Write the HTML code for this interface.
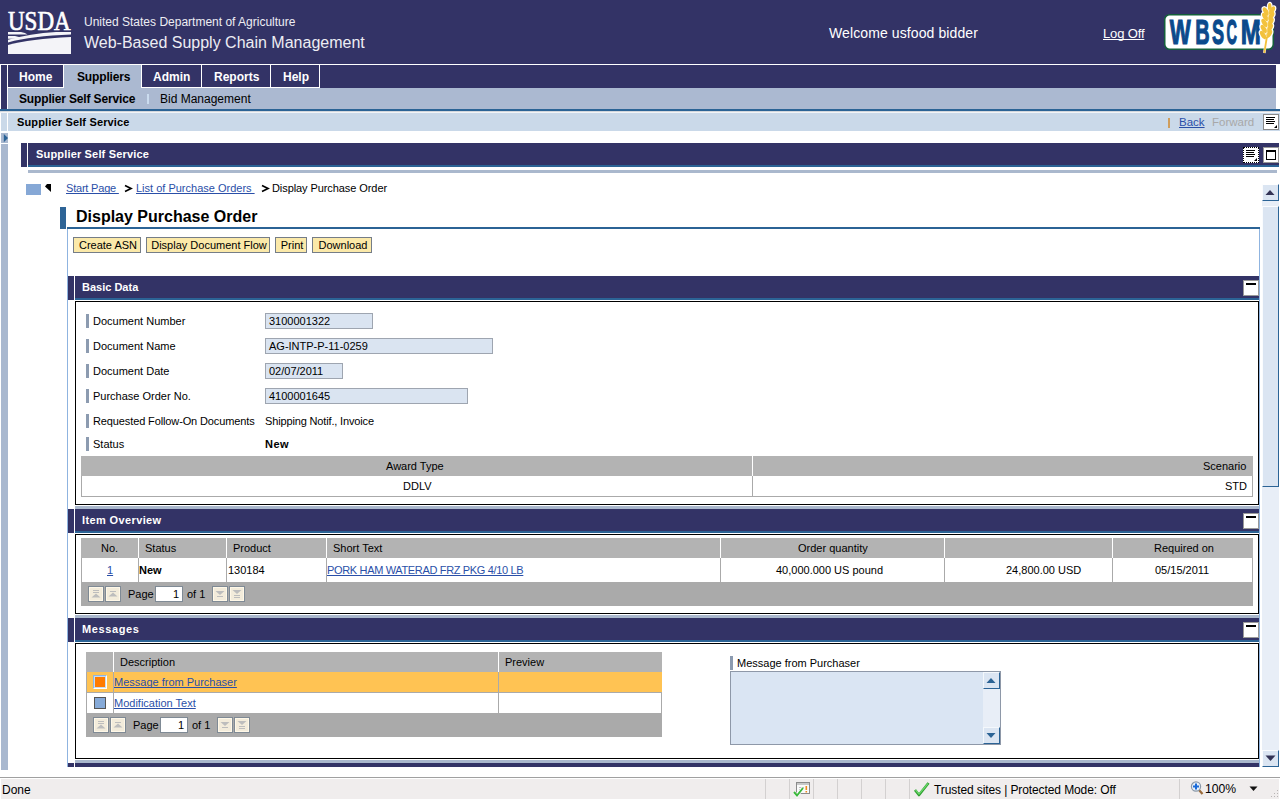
<!DOCTYPE html>
<html><head><meta charset="utf-8">
<style>
*{margin:0;padding:0;box-sizing:border-box}
html,body{width:1280px;height:800px;overflow:hidden;background:#fff;font-family:"Liberation Sans",sans-serif;color:#000}
.a{position:absolute}
.t{position:absolute;white-space:nowrap;line-height:1;text-decoration-skip-ink:none}
.lnk,.t{text-decoration-skip-ink:none}
.b{font-weight:bold}
.lnk{color:#2a4fa8;text-decoration:underline}
.btn{top:237px;height:16px;background:#fbe9a9;border:1px solid #757d87;padding-left:2px;font-size:11px;line-height:14px;text-align:center;white-space:nowrap}
.mini{width:16px;height:16px;background:#fff;border:1px solid #999}
.mini:after{content:"";position:absolute;left:2px;top:2px;width:10px;height:2px;background:#000}
.lbar{left:86px;width:3px;height:14px;background:#8c9bb0}
.inp{left:265px;height:16px;background:#dae4f1;border:1px solid #9ea5b0;font-size:11px;line-height:14px;padding-left:3px;white-space:nowrap}
.pb{width:15px;height:15px;background:#f2ead5;border:1px solid #999}
.pin{width:28px;height:16px;background:#fff;border:1px solid #7f8a95;font-size:11px;line-height:14px;text-align:right;padding-right:3px}
</style></head><body>
<!-- HEADER -->
<div class="a" style="left:0;top:0;width:1280px;height:64px;background:#333366"></div>
<svg class="a" style="left:0;top:0" width="80" height="64" viewBox="0 0 80 64">
  <text x="8" y="29.8" font-family="Liberation Serif" font-size="28" fill="#fff" stroke="#fff" stroke-width="0.7" textLength="62.6" lengthAdjust="spacingAndGlyphs">USDA</text>
  <g fill="#f4f4f8">
  <path d="M8,32 H21 Q25.5,32.6 27.5,34.6 H8 Z"/>
  <path d="M8,35.9 H15 Q19.5,36.6 22,38.8 H8 Z"/>
  <path d="M8,39.8 Q30,33.6 56,32 H71 V34.6 Q32,36.2 8,42.4 Z"/>
  <path d="M8,45 Q30,38.6 71,36.9 V54 H8 Z"/>
  </g>
</svg>
<div class="t" style="left:84px;top:16px;font-size:12px;color:#ededf3">United States Department of Agriculture</div>
<div class="t" style="left:84px;top:35px;font-size:16px;color:#ededf3">Web-Based Supply Chain Management</div>
<div class="t" style="left:829px;top:26px;font-size:14px;letter-spacing:0.1px;color:#fff">Welcome usfood bidder</div>
<div class="t" style="left:1103px;top:27px;font-size:13px;letter-spacing:-0.15px;color:#fff;text-decoration:underline">Log Off</div>
<svg class="a" style="left:1160px;top:0" width="120" height="60" viewBox="0 0 120 60">
  <rect x="4.7" y="14.7" width="108.6" height="34.6" rx="5" fill="#fff" stroke="#14603a" stroke-width="1.6"/>
  <text transform="translate(9.85,0) scale(0.635,1)" x="0" y="44.2" font-family="Liberation Sans" font-weight="bold" font-size="35" fill="#0b4a8c" stroke="#0b4a8c" stroke-width="1" vector-effect="non-scaling-stroke">W</text><text transform="translate(35.31,0) scale(0.568,1)" x="0" y="44.2" font-family="Liberation Sans" font-weight="bold" font-size="35" fill="#0b4a8c" stroke="#0b4a8c" stroke-width="1" vector-effect="non-scaling-stroke">B</text><text transform="translate(51.93,0) scale(0.518,1)" x="0" y="44.2" font-family="Liberation Sans" font-weight="bold" font-size="35" fill="#0b4a8c" stroke="#0b4a8c" stroke-width="1" vector-effect="non-scaling-stroke">S</text><text transform="translate(66.42,0) scale(0.413,1)" x="0" y="44.2" font-family="Liberation Sans" font-weight="bold" font-size="35" fill="#0b4a8c" stroke="#0b4a8c" stroke-width="1" vector-effect="non-scaling-stroke">C</text><text transform="translate(80.77,0) scale(0.692,1)" x="0" y="44.2" font-family="Liberation Sans" font-weight="bold" font-size="35" fill="#0b4a8c" stroke="#0b4a8c" stroke-width="1" vector-effect="non-scaling-stroke">M</text>
  <g transform="translate(1.5,0)"><g fill="#fff" stroke="#fff" stroke-width="2.4"><path d="M102.8,53 L105.5,36" fill="none"/><ellipse cx="101.56" cy="35.00" rx="2.3" ry="4.6" transform="rotate(-32 101.56 35.00)"/><ellipse cx="107.56" cy="34.00" rx="2.3" ry="4.6" transform="rotate(32 107.56 34.00)"/><ellipse cx="102.29" cy="29.00" rx="2.3" ry="4.6" transform="rotate(-32 102.29 29.00)"/><ellipse cx="108.29" cy="28.00" rx="2.3" ry="4.6" transform="rotate(32 108.29 28.00)"/><ellipse cx="103.02" cy="23.00" rx="2.3" ry="4.6" transform="rotate(-32 103.02 23.00)"/><ellipse cx="109.02" cy="22.00" rx="2.3" ry="4.6" transform="rotate(32 109.02 22.00)"/><ellipse cx="103.75" cy="17.00" rx="2.3" ry="4.6" transform="rotate(-32 103.75 17.00)"/><ellipse cx="109.75" cy="16.00" rx="2.3" ry="4.6" transform="rotate(32 109.75 16.00)"/><ellipse cx="104.41" cy="11.50" rx="2.3" ry="4.6" transform="rotate(-32 104.41 11.50)"/><ellipse cx="110.41" cy="10.50" rx="2.3" ry="4.6" transform="rotate(32 110.41 10.50)"/><ellipse cx="108.2" cy="7" rx="1.8" ry="4"/></g>
  <g fill="#f3c23c"><path d="M102.8,53 L105.5,36" stroke="#f3c23c" stroke-width="1.8" fill="none"/><ellipse cx="101.56" cy="35.00" rx="2.3" ry="4.6" transform="rotate(-32 101.56 35.00)"/><ellipse cx="107.56" cy="34.00" rx="2.3" ry="4.6" transform="rotate(32 107.56 34.00)"/><ellipse cx="102.29" cy="29.00" rx="2.3" ry="4.6" transform="rotate(-32 102.29 29.00)"/><ellipse cx="108.29" cy="28.00" rx="2.3" ry="4.6" transform="rotate(32 108.29 28.00)"/><ellipse cx="103.02" cy="23.00" rx="2.3" ry="4.6" transform="rotate(-32 103.02 23.00)"/><ellipse cx="109.02" cy="22.00" rx="2.3" ry="4.6" transform="rotate(32 109.02 22.00)"/><ellipse cx="103.75" cy="17.00" rx="2.3" ry="4.6" transform="rotate(-32 103.75 17.00)"/><ellipse cx="109.75" cy="16.00" rx="2.3" ry="4.6" transform="rotate(32 109.75 16.00)"/><ellipse cx="104.41" cy="11.50" rx="2.3" ry="4.6" transform="rotate(-32 104.41 11.50)"/><ellipse cx="110.41" cy="10.50" rx="2.3" ry="4.6" transform="rotate(32 110.41 10.50)"/><ellipse cx="108.2" cy="7" rx="1.8" ry="4"/></g>
  <g stroke="#fbe6a8" stroke-width="0.6" fill="none"><path d="M105,37 L107.5,9"/></g></g>
</svg>

<!-- NAV -->
<div class="a" style="left:1px;top:65px;width:1275px;height:44px;background:#333366"></div>
<div class="a" style="left:7px;top:65px;width:1px;height:44px;background:#fff"></div>
<div class="a" style="left:8px;top:88px;width:1268px;height:21px;background:#abb9d1"></div>
<!-- tabs borders -->
<div class="a" style="left:8px;top:87px;width:312px;height:1px;background:#fff"></div>
<div class="a" style="left:63px;top:65px;width:1px;height:23px;background:#fff"></div>
<div class="a" style="left:64px;top:65px;width:77px;height:23px;background:#abb9d1"></div>
<div class="a" style="left:64px;top:87px;width:77px;height:1px;background:#abb9d1"></div>
<div class="a" style="left:141px;top:65px;width:1px;height:23px;background:#fff"></div>
<div class="a" style="left:201px;top:65px;width:1px;height:23px;background:#fff"></div>
<div class="a" style="left:270px;top:65px;width:1px;height:23px;background:#fff"></div>
<div class="a" style="left:319px;top:65px;width:1px;height:23px;background:#fff"></div>
<div class="t b" style="left:19px;top:71px;font-size:12px;color:#fff">Home</div>
<div class="t b" style="left:77px;top:71px;letter-spacing:-0.15px;font-size:12px;color:#000">Suppliers</div>
<div class="t b" style="left:153px;top:71px;font-size:12px;color:#fff">Admin</div>
<div class="t b" style="left:214px;top:71px;font-size:12px;color:#fff">Reports</div>
<div class="t b" style="left:283px;top:71px;font-size:12px;color:#fff">Help</div>
<div class="t b" style="left:19px;top:93px;font-size:12px;letter-spacing:-0.15px;color:#000">Supplier Self Service</div>
<div class="a" style="left:147px;top:94px;width:2px;height:10px;background:#cbdcef"></div>
<div class="t" style="left:160px;top:93px;font-size:12px;color:#000">Bid Management</div>

<div class="a" style="left:0;top:109px;width:1280px;height:2px;background:#2b6395"></div>
<!-- toolbar -->
<div class="a" style="left:0;top:111px;width:1280px;height:1px;background:#d3d7dc"></div>
<div class="a" style="left:0;top:112px;width:1280px;height:1px;background:#f2f4f7"></div>
<div class="a" style="left:1px;top:113px;width:6px;height:18px;background:#cad9e9"></div>
<div class="a" style="left:8px;top:113px;width:1272px;height:18px;background:#cad9e9"></div>
<div class="t b" style="left:17px;top:117px;font-size:11px;letter-spacing:0.15px;color:#000">Supplier Self Service</div>
<div class="a" style="left:1168px;top:118px;width:2px;height:10px;background:#cf9d5c"></div>
<div class="t" style="left:1179px;top:117px;font-size:11.5px;color:#2a4fa8;text-decoration:underline">Back</div>
<div class="t" style="left:1212px;top:117px;font-size:11.5px;color:#a8a8a8">Forward</div>
<div class="a" style="left:1263px;top:114px;width:16px;height:16px;background:#fff;border:1px solid #8a8a8a"></div><svg class="a" style="left:1263px;top:114px" width="16" height="16" viewBox="0 0 16 16"><rect x="3" y="3" width="9" height="1" fill="#000"/><rect x="3" y="5" width="8" height="1" fill="#000"/><rect x="3" y="7" width="9" height="1" fill="#000"/><rect x="3" y="9" width="8" height="1" fill="#000"/><path d="M11,14 L14,14 L14,11 Z" fill="#000"/></svg>

<!-- left nav strip -->
<div class="a" style="left:1px;top:133px;width:7px;height:10px;background:#a9b8cf"></div>
<svg class="a" style="left:1px;top:133px" width="7" height="10"><path d="M2.8,1 L7,5 L2.8,9.2 Z" fill="#2b6395"/></svg>
<div class="a" style="left:1px;top:144px;width:7px;height:626px;background:#a9b8cf"></div>

<!-- portlet header -->
<div class="a" style="left:21px;top:143px;width:6px;height:24px;background:#333366"></div>
<div class="a" style="left:28px;top:143px;width:1251px;height:22px;background:#333366"></div>
<div class="a" style="left:28px;top:165px;width:1251px;height:2px;background:#2b6395"></div>
<div class="a" style="left:28px;top:170px;width:1249px;height:3px;background:#aab8cd"></div>
<div class="t b" style="left:36px;top:149px;font-size:11px;letter-spacing:0.17px;color:#fff">Supplier Self Service</div>
<div class="a" style="left:1243px;top:147px;width:16px;height:16px;background:#fff;border:1px dotted #000"></div><svg class="a" style="left:1243px;top:147px" width="16" height="16" viewBox="0 0 16 16"><rect x="3" y="3" width="9" height="1" fill="#000"/><rect x="3" y="5" width="8" height="1" fill="#000"/><rect x="3" y="7" width="9" height="1" fill="#000"/><rect x="3" y="9" width="8" height="1" fill="#000"/><path d="M11,14 L14,14 L14,11 Z" fill="#000"/></svg>
<div class="a" style="left:1263px;top:147px;width:16px;height:16px;background:#fff;border:1px solid #999"></div><div class="a" style="left:1266px;top:150px;width:10px;height:10px;border:1px solid #000;border-top-width:2px"></div>

<!-- CONTENT -->
<!-- breadcrumb -->
<div class="a" style="left:26px;top:184px;width:15px;height:11px;background:#86a8d6"></div>
<svg class="a" style="left:44px;top:183px" width="8" height="10"><path d="M3,1 L7,1 L7,9 L1,3.5 Z" fill="#000"/></svg>
<div class="t lnk" style="left:66px;top:183px;font-size:11px;letter-spacing:-0.2px">Start Page&nbsp;</div><svg class="a" style="left:122px;top:183px" width="12" height="11"><path d="M3,2.6 L9,5.5 L3,8.4" stroke="#000" stroke-width="1.7" fill="none"/></svg><div class="t lnk" style="left:136px;top:183px;font-size:11px">List of Purchase Orders&nbsp;</div><svg class="a" style="left:258.5px;top:183px" width="12" height="11"><path d="M3,2.6 L9,5.5 L3,8.4" stroke="#000" stroke-width="1.7" fill="none"/></svg><div class="t" style="left:272px;top:183px;font-size:11px;letter-spacing:-0.08px">Display Purchase Order</div>

<!-- scrollbar -->
<div class="a" style="left:1262px;top:201px;width:17px;height:566px;background:#e8eef7"></div>
<div class="a" style="left:1262px;top:184px;width:17px;height:17px;background:#dbe5f2;border-right:1px solid #2b6395;border-bottom:1px solid #2b6395;border-left:1px solid #fafcfe;border-top:1px solid #fff"></div>
<div class="a" style="left:1262px;top:201px;width:17px;height:5px;background:#e8eef7"></div>
<div class="a" style="left:1262px;top:206px;width:17px;height:281px;background:#dbe5f2;border-right:1px solid #2b6395;border-bottom:1px solid #2b6395;border-left:1px solid #fafcfe;border-top:1px solid #fafcfe"></div>
<div class="a" style="left:1262px;top:750px;width:17px;height:17px;background:#dbe5f2;border-right:1px solid #2b6395;border-bottom:1px solid #2b6395;border-left:1px solid #fafcfe;border-top:1px solid #fafcfe"></div>
<svg class="a" style="left:1262px;top:185px" width="17" height="16"><path d="M3.5,10 L12.5,10 L8,5 Z" fill="#333355"/></svg>
<svg class="a" style="left:1262px;top:750px" width="17" height="16"><path d="M3.5,5.5 L13.5,5.5 L8.5,11 Z" fill="#333355"/></svg>

<!-- title -->
<div class="a" style="left:60px;top:207px;width:6px;height:22px;background:#2e6496"></div>
<div class="a" style="left:67px;top:227px;width:1193px;height:2px;background:#2b6395"></div>
<div class="t b" style="left:76px;top:209px;font-size:16px">Display Purchase Order</div>
<div class="a" style="left:67px;top:229px;width:1px;height:538px;background:#8fb4e0"></div>
<div class="a" style="left:1259px;top:229px;width:1px;height:538px;background:#8fb4e0"></div>

<!-- buttons -->
<div class="a btn" style="left:73px;width:68px">Create ASN</div>
<div class="a btn" style="left:146px;width:124px">Display Document Flow</div>
<div class="a btn" style="left:275px;width:32px">Print</div>
<div class="a btn" style="left:312px;width:60px">Download</div>

<!-- BASIC DATA -->
<div class="a" style="left:68px;top:276px;width:6px;height:24px;background:#333366"></div>
<div class="a" style="left:75px;top:276px;width:1184px;height:22px;background:#333366"></div>
<div class="a" style="left:75px;top:298px;width:1184px;height:2px;background:#2b6395"></div>
<div class="t b" style="left:82px;top:282px;font-size:11px;color:#fff">Basic Data</div>
<div class="a mini" style="left:1243px;top:280px"></div>
<div class="a" style="left:75px;top:301px;width:1184px;height:204px;border:1px solid #000"></div>

<div class="a lbar" style="top:314px"></div><div class="t" style="left:93px;top:316px;font-size:11px">Document Number</div>
<div class="a inp" style="top:313px;width:108px">3100001322</div>
<div class="a lbar" style="top:339px"></div><div class="t" style="left:93px;top:341px;font-size:11px">Document Name</div>
<div class="a inp" style="top:338px;width:228px">AG-INTP-P-11-0259</div>
<div class="a lbar" style="top:364px"></div><div class="t" style="left:93px;top:366px;font-size:11px">Document Date</div>
<div class="a inp" style="top:363px;width:78px">02/07/2011</div>
<div class="a lbar" style="top:389px"></div><div class="t" style="left:93px;top:391px;font-size:11px">Purchase Order No.</div>
<div class="a inp" style="top:388px;width:203px">4100001645</div>
<div class="a lbar" style="top:414px"></div><div class="t" style="left:93px;top:416px;font-size:11px;letter-spacing:-0.12px">Requested Follow-On Documents</div>
<div class="t" style="left:265px;top:416px;font-size:11px;letter-spacing:-0.15px">Shipping Notif., Invoice</div>
<div class="a lbar" style="top:437px"></div><div class="t" style="left:93px;top:439px;font-size:11px">Status</div>
<div class="t b" style="left:265px;top:439px;font-size:11px;letter-spacing:0.5px">New</div>

<div class="a" style="left:81px;top:456px;width:1172px;height:41px;border:1px solid #aaa;border-top:0;background:#fff"></div>
<div class="a" style="left:81px;top:456px;width:1172px;height:20px;background:#b3b3b3"></div>
<div class="a" style="left:752px;top:456px;width:1px;height:20px;background:#fff"></div>
<div class="a" style="left:752px;top:476px;width:1px;height:20px;background:#aaa"></div>
<div class="t" style="left:386px;top:461px;font-size:11px">Award Type</div>
<div class="t" style="left:403px;top:481px;font-size:11px">DDLV</div>
<div class="t" style="left:1203px;top:461px;font-size:11px">Scenario</div>
<div class="t" style="left:1225px;top:481px;font-size:11px">STD</div>

<div class="a" style="left:75px;top:506px;width:1184px;height:3px;background:#aab8cd"></div>

<!-- ITEM OVERVIEW -->
<div class="a" style="left:68px;top:509px;width:6px;height:24px;background:#333366"></div>
<div class="a" style="left:75px;top:509px;width:1184px;height:22px;background:#333366"></div>
<div class="a" style="left:75px;top:531px;width:1184px;height:2px;background:#2b6395"></div>
<div class="t b" style="left:82px;top:515px;font-size:11px;letter-spacing:0.38px;color:#fff">Item Overview</div>
<div class="a mini" style="left:1243px;top:513px"></div>
<div class="a" style="left:75px;top:534px;width:1184px;height:80px;border:1px solid #000"></div>

<div class="a" style="left:81px;top:538px;width:1172px;height:68px;background:#aaaaaa"></div>
<div class="a" style="left:81px;top:538px;width:1172px;height:20px;background:#b3b3b3"></div>
<div class="a" style="left:82px;top:558px;width:1170px;height:24px;background:#fff"></div>
<div class="a" style="left:138px;top:538px;width:1px;height:20px;background:#fff"></div>
<div class="a" style="left:226px;top:538px;width:1px;height:20px;background:#fff"></div>
<div class="a" style="left:326px;top:538px;width:1px;height:20px;background:#fff"></div>
<div class="a" style="left:720px;top:538px;width:1px;height:20px;background:#fff"></div>
<div class="a" style="left:944px;top:538px;width:1px;height:20px;background:#fff"></div>
<div class="a" style="left:1112px;top:538px;width:1px;height:20px;background:#fff"></div>
<div class="a" style="left:138px;top:558px;width:1px;height:24px;background:#aaa"></div>
<div class="a" style="left:226px;top:558px;width:1px;height:24px;background:#aaa"></div>
<div class="a" style="left:326px;top:558px;width:1px;height:24px;background:#aaa"></div>
<div class="a" style="left:720px;top:558px;width:1px;height:24px;background:#aaa"></div>
<div class="a" style="left:944px;top:558px;width:1px;height:24px;background:#aaa"></div>
<div class="a" style="left:1112px;top:558px;width:1px;height:24px;background:#aaa"></div>
<div class="t" style="left:101px;top:543px;font-size:11px">No.</div>
<div class="t" style="left:145px;top:543px;font-size:11px">Status</div>
<div class="t" style="left:233px;top:543px;font-size:11px">Product</div>
<div class="t" style="left:333px;top:543px;font-size:11px">Short Text</div>
<div class="t" style="left:798px;top:543px;font-size:11px">Order quantity</div>
<div class="t" style="left:1154px;top:543px;font-size:11px">Required on</div>
<div class="t lnk" style="left:107px;top:565px;font-size:11px">1</div>
<div class="t b" style="left:139px;top:565px;font-size:11px">New</div>
<div class="t" style="left:228px;top:565px;font-size:11px">130184</div>
<div class="t lnk" style="left:327px;top:565px;font-size:11px;letter-spacing:-0.34px">PORK HAM WATERAD FRZ PKG 4/10 LB</div>
<div class="t" style="left:776px;top:565px;font-size:11px">40,000.000 US pound</div>
<div class="t" style="left:1006px;top:565px;font-size:11px">24,800.00 USD</div>
<div class="t" style="left:1155px;top:565px;font-size:11px">05/15/2011</div>
<svg class="a" style="left:88px;top:586px" width="16" height="16" viewBox="0 0 16 16"><rect x="0.5" y="0.5" width="15" height="15" fill="#f3ecdb" stroke="#7f8a95"/><rect x="1.5" y="1.5" width="13" height="13" fill="none" stroke="#fff8e8" stroke-width="1"/><rect x="5" y="4" width="6" height="1" fill="#bdbdbd"/><rect x="5" y="6" width="6" height="1" fill="#bdbdbd"/><path d="M3.5,11.5 L12.5,11.5 L8,7.5 Z" fill="#bdbdbd"/></svg>
<svg class="a" style="left:105px;top:586px" width="16" height="16" viewBox="0 0 16 16"><rect x="0.5" y="0.5" width="15" height="15" fill="#f3ecdb" stroke="#7f8a95"/><rect x="1.5" y="1.5" width="13" height="13" fill="none" stroke="#fff8e8" stroke-width="1"/><rect x="5" y="5" width="6" height="1" fill="#bdbdbd"/><path d="M3.5,10.5 L12.5,10.5 L8,6.5 Z" fill="#bdbdbd"/></svg>
<div class="t" style="left:128px;top:589px;font-size:11px">Page</div>
<div class="a pin" style="left:155px;top:586px">1</div>
<div class="t" style="left:187px;top:589px;font-size:11px">of 1</div>
<svg class="a" style="left:212px;top:586px" width="16" height="16" viewBox="0 0 16 16"><rect x="0.5" y="0.5" width="15" height="15" fill="#f3ecdb" stroke="#7f8a95"/><rect x="1.5" y="1.5" width="13" height="13" fill="none" stroke="#fff8e8" stroke-width="1"/><path d="M3.5,5 L12.5,5 L8,9 Z" fill="#bdbdbd"/><rect x="5" y="10" width="6" height="1" fill="#bdbdbd"/></svg>
<svg class="a" style="left:229px;top:586px" width="16" height="16" viewBox="0 0 16 16"><rect x="0.5" y="0.5" width="15" height="15" fill="#f3ecdb" stroke="#7f8a95"/><rect x="1.5" y="1.5" width="13" height="13" fill="none" stroke="#fff8e8" stroke-width="1"/><path d="M3.5,4 L12.5,4 L8,8 Z" fill="#bdbdbd"/><rect x="5" y="9" width="6" height="1" fill="#bdbdbd"/><rect x="5" y="11" width="6" height="1" fill="#bdbdbd"/></svg>

<div class="a" style="left:75px;top:615px;width:1184px;height:3px;background:#aab8cd"></div>

<!-- MESSAGES -->
<div class="a" style="left:68px;top:618px;width:6px;height:24px;background:#333366"></div>
<div class="a" style="left:75px;top:618px;width:1184px;height:22px;background:#333366"></div>
<div class="a" style="left:75px;top:640px;width:1184px;height:2px;background:#2b6395"></div>
<div class="t b" style="left:82px;top:624px;font-size:11px;letter-spacing:0.6px;color:#fff">Messages</div>
<div class="a mini" style="left:1243px;top:622px"></div>
<div class="a" style="left:75px;top:643px;width:1184px;height:116px;border:1px solid #000"></div>

<div class="a" style="left:86px;top:652px;width:576px;height:85px;background:#aaaaaa"></div>
<div class="a" style="left:86px;top:652px;width:576px;height:20px;background:#b3b3b3"></div>
<div class="a" style="left:87px;top:672px;width:575px;height:20px;background:#ffc353"></div>
<div class="a" style="left:87px;top:693px;width:574px;height:20px;background:#fff"></div>
<div class="a" style="left:113px;top:652px;width:1px;height:20px;background:#fff"></div>
<div class="a" style="left:498px;top:652px;width:1px;height:20px;background:#fff"></div>
<div class="a" style="left:113px;top:672px;width:1px;height:41px;background:#aaa"></div>
<div class="a" style="left:498px;top:672px;width:1px;height:41px;background:#aaa"></div>
<div class="t" style="left:120px;top:657px;font-size:11px">Description</div>
<div class="t" style="left:505px;top:657px;font-size:11px">Preview</div>
<div class="a" style="left:93px;top:675px;width:14px;height:14px;background:#c8dcf0;border-top:1px solid #8db5e3;border-left:1px solid #8db5e3;border-right:1px solid #fff;border-bottom:1px solid #fff"></div><div class="a" style="left:95px;top:677px;width:10px;height:10px;background:#ff7b00"></div>
<div class="t lnk" style="left:114px;top:677px;font-size:11px">Message from Purchaser</div>
<div class="a" style="left:94px;top:697px;width:12px;height:12px;background:#86aad8;border:1px solid #555"></div>
<div class="t lnk" style="left:114px;top:698px;font-size:11px">Modification Text</div>
<svg class="a" style="left:93px;top:717px" width="16" height="16" viewBox="0 0 16 16"><rect x="0.5" y="0.5" width="15" height="15" fill="#f3ecdb" stroke="#7f8a95"/><rect x="1.5" y="1.5" width="13" height="13" fill="none" stroke="#fff8e8" stroke-width="1"/><rect x="5" y="4" width="6" height="1" fill="#bdbdbd"/><rect x="5" y="6" width="6" height="1" fill="#bdbdbd"/><path d="M3.5,11.5 L12.5,11.5 L8,7.5 Z" fill="#bdbdbd"/></svg>
<svg class="a" style="left:110px;top:717px" width="16" height="16" viewBox="0 0 16 16"><rect x="0.5" y="0.5" width="15" height="15" fill="#f3ecdb" stroke="#7f8a95"/><rect x="1.5" y="1.5" width="13" height="13" fill="none" stroke="#fff8e8" stroke-width="1"/><rect x="5" y="5" width="6" height="1" fill="#bdbdbd"/><path d="M3.5,10.5 L12.5,10.5 L8,6.5 Z" fill="#bdbdbd"/></svg>
<div class="t" style="left:133px;top:720px;font-size:11px">Page</div>
<div class="a pin" style="left:160px;top:717px">1</div>
<div class="t" style="left:192px;top:720px;font-size:11px">of 1</div>
<svg class="a" style="left:217px;top:717px" width="16" height="16" viewBox="0 0 16 16"><rect x="0.5" y="0.5" width="15" height="15" fill="#f3ecdb" stroke="#7f8a95"/><rect x="1.5" y="1.5" width="13" height="13" fill="none" stroke="#fff8e8" stroke-width="1"/><path d="M3.5,5 L12.5,5 L8,9 Z" fill="#bdbdbd"/><rect x="5" y="10" width="6" height="1" fill="#bdbdbd"/></svg>
<svg class="a" style="left:234px;top:717px" width="16" height="16" viewBox="0 0 16 16"><rect x="0.5" y="0.5" width="15" height="15" fill="#f3ecdb" stroke="#7f8a95"/><rect x="1.5" y="1.5" width="13" height="13" fill="none" stroke="#fff8e8" stroke-width="1"/><path d="M3.5,4 L12.5,4 L8,8 Z" fill="#bdbdbd"/><rect x="5" y="9" width="6" height="1" fill="#bdbdbd"/><rect x="5" y="11" width="6" height="1" fill="#bdbdbd"/></svg>

<div class="a" style="left:730px;top:656px;width:3px;height:14px;background:#8c9bb0"></div>
<div class="t" style="left:737px;top:658px;font-size:11px">Message from Purchaser</div>
<div class="a" style="left:730px;top:671px;width:271px;height:74px;background:#dae5f3;border:1px solid #8e98a8"></div>
<div class="a" style="left:983px;top:672px;width:17px;height:72px;background:#e8eef7"></div>
<div class="a" style="left:983px;top:672px;width:17px;height:17px;background:#dbe5f2;border-right:1px solid #2b6395;border-bottom:1px solid #2b6395;border-top:1px solid #f4f8fc;border-left:1px solid #f4f8fc"></div>
<div class="a" style="left:983px;top:727px;width:17px;height:17px;background:#dbe5f2;border-right:1px solid #2b6395;border-bottom:1px solid #2b6395;border-top:1px solid #f4f8fc;border-left:1px solid #f4f8fc"></div>
<svg class="a" style="left:983px;top:672px" width="17" height="17"><path d="M3.5,11 L12.5,11 L8,6 Z" fill="#2b6395"/></svg>
<svg class="a" style="left:983px;top:727px" width="17" height="17"><path d="M3.5,6 L12.5,6 L8,11 Z" fill="#2b6395"/></svg>

<div class="a" style="left:75px;top:760px;width:1184px;height:3px;background:#aab8cd"></div>
<div class="a" style="left:68px;top:763px;width:6px;height:4px;background:#333366"></div>
<div class="a" style="left:75px;top:763px;width:1184px;height:4px;background:#333366"></div>


<!-- STATUS BAR -->
<div class="a" style="left:0;top:777px;width:1280px;height:1px;background:#a0a0a0"></div>
<div class="a" style="left:0;top:778px;width:1280px;height:22px;background:#fff"></div>
<div class="a" style="left:1px;top:779px;width:1278px;height:20px;background:#f0eded"></div>
<div class="a" style="left:765px;top:779px;width:1px;height:20px;background:#d3d0d0"></div><div class="a" style="left:789px;top:779px;width:1px;height:20px;background:#d3d0d0"></div><div class="a" style="left:813px;top:779px;width:1px;height:20px;background:#d3d0d0"></div><div class="a" style="left:837px;top:779px;width:1px;height:20px;background:#d3d0d0"></div><div class="a" style="left:861px;top:779px;width:1px;height:20px;background:#d3d0d0"></div><div class="a" style="left:885px;top:779px;width:1px;height:20px;background:#d3d0d0"></div><div class="a" style="left:909px;top:779px;width:1px;height:20px;background:#d3d0d0"></div><div class="a" style="left:1179px;top:779px;width:1px;height:20px;background:#d3d0d0"></div>
<div class="t" style="left:2px;top:784px;font-size:12px;color:#000">Done</div>
<svg class="a" style="left:792px;top:780px" width="20" height="19" viewBox="0 0 20 19">
  <rect x="4.5" y="2.5" width="13" height="11" fill="#fafafa" stroke="#8a8a8a"/>
  <rect x="5" y="3" width="12" height="2" fill="#c8c8c8"/>
  <rect x="7" y="7" width="5" height="1" fill="#c0c0c0"/><rect x="7" y="9" width="4" height="1" fill="#c0c0c0"/>
  <rect x="13.5" y="6" width="1.6" height="4" fill="#f08a1c"/><rect x="13.5" y="11" width="1.6" height="1.5" fill="#f08a1c"/>
  <path d="M2,12 L5,15.5 L11,8" stroke="#fff" stroke-width="3.2" fill="none"/>
  <path d="M2,12 L5,15.5 L11,8" stroke="#3cb83c" stroke-width="2" fill="none"/>
</svg>
<svg class="a" style="left:913px;top:781px" width="18" height="16" viewBox="0 0 18 16">
  <path d="M2,9 L6,14 L15.5,2" stroke="#2e9e2e" stroke-width="2.6" fill="none" stroke-linejoin="round"/>
  <path d="M2.5,9 L6,13 L15,2.5" stroke="#6ad66a" stroke-width="1.2" fill="none"/>
</svg>
<div class="t" style="left:934px;top:784px;font-size:12px;letter-spacing:-0.1px;color:#000">Trusted sites | Protected Mode: Off</div>
<svg class="a" style="left:1189px;top:780px" width="16" height="17" viewBox="0 0 16 17">
  <line x1="10" y1="10" x2="13.5" y2="14" stroke="#9a6a3a" stroke-width="2.2"/>
  <circle cx="7" cy="6.5" r="4.6" fill="#e8f0fa" stroke="#8a98a8" stroke-width="1.2"/>
  <rect x="6" y="3.5" width="2" height="6" fill="#1a6ad8"/><rect x="4" y="5.5" width="6" height="2" fill="#1a6ad8"/>
</svg>
<div class="t" style="left:1205px;top:783px;font-size:12.2px;color:#000">100%</div>
<svg class="a" style="left:1249px;top:786px" width="10" height="6"><path d="M0.5,0.5 L8.5,0.5 L4.5,5 Z" fill="#111"/></svg>
<svg class="a" style="left:1269px;top:789px" width="11" height="10">
  <g fill="#b8b4b4"><rect x="8" y="1" width="1" height="1"/><rect x="5" y="4" width="1" height="1"/><rect x="8" y="4" width="1" height="1"/><rect x="2" y="7" width="1" height="1"/><rect x="5" y="7" width="1" height="1"/><rect x="8" y="7" width="1" height="1"/></g>
</svg>
</body></html>
